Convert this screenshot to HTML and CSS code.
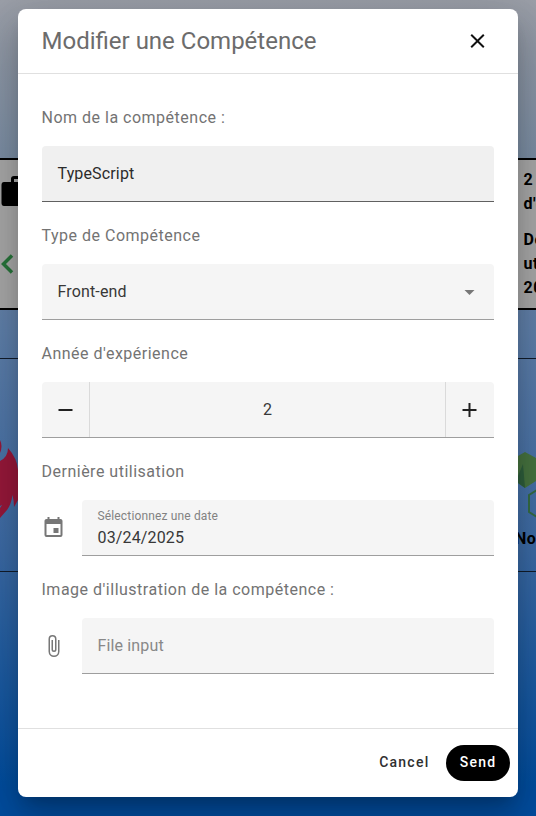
FILE: index.html
```html
<!DOCTYPE html>
<html lang="fr">
<head>
<meta charset="utf-8">
<title>Modifier une Compétence</title>
<link rel="stylesheet" href="styles.css">
</head>
<body>
<div class="page">
  <div class="band">
    <div class="band-icons">
      <svg width="18" height="32" viewBox="0 0 18 32"><path d="M4 6H11V3Q11 0 14 0H18V3H14V6H18V30H4Q1.500 30 1.500 27V9Q1.500 6 4 6Z"/></svg>
      <svg class="chevron" width="18" height="20" viewBox="0 0 18 20"><path d="M12 1.500L3.500 10L12 18.500"/></svg>
    </div>
    <div class="band-text"><p>2 ans<br>d'expérience</p><p>Dernière<br>utilisation<br>2025</p></div>
  </div>
  <div class="skills">
    <svg class="flame" width="18" height="90" viewBox="0 0 18 90"><path d="M0 5Q3 11 0 18ZM8 13Q17 23 18 35V65L14 72Q14 66 12.500 60Q11 70 7 75L0 83V73L2 70L0 71V26Q8 22 8 13Z"/></svg>
    <div class="node">
      <svg width="18" height="76" viewBox="0 0 18 76"><path fill="#477440" d="M0 7L7 3L18 9V32L7 39L0 34Z"/><path fill="#2f5f3d" d="M0 27L5 15L7 39L0 34Z"/><path fill="none" stroke="#356c43" stroke-width="2" d="M19 41L11 46V63L19 68"/></svg>
      <span>Node</span>
    </div>
  </div>
</div>
<main class="dialog">
  <header class="head">
    <h1>Modifier une Compétence</h1>
    <svg class="close" width="24" height="24" viewBox="0.5 0 24 24"><path d="M19 6.410L17.590 5L12 10.590L6.410 5L5 6.410L10.590 12L5 17.590L6.410 19L12 13.410L17.590 19L19 17.590L13.410 12Z"/></svg>
  </header>
  <form class="body">
    <div class="label">Nom de la compétence :</div>
    <div class="field hover">TypeScript</div>
    <div class="label">Type de Compétence</div>
    <div class="field select">Front-end<svg width="24" height="24" viewBox="0.5 0 24 24"><path d="M7 10L12 15L17 10Z"/></svg></div>
    <div class="label">Année d'expérience</div>
    <div class="field number">
      <span class="step"><svg width="24" height="24" viewBox="0.5 0 24 24"><path d="M19 13H5V11H19Z"/></svg></span>
      <span class="value">2</span>
      <span class="step"><svg width="24" height="24" viewBox="0.5 0 24 24"><path d="M19 13H13V19H11V13H5V11H11V5H13V11H19Z"/></svg></span>
    </div>
    <div class="label">Dernière utilisation</div>
    <div class="row">
      <svg width="24" height="24" viewBox="0.5 0 24 24"><path d="M19 19H5V8H19M16 1V3H8V1H6V3H5C3.890 3 3 3.890 3 5V19A2 2 0 0 0 5 21H19A2 2 0 0 0 21 19V5C21 3.890 20.100 3 19 3H18V1M17 12H12V17H17V12Z"/></svg>
      <div class="field date"><small>Sélectionnez une date</small><span>03/24/2025</span></div>
    </div>
    <div class="label">Image d'illustration de la compétence :</div>
    <div class="row">
      <svg width="24" height="24" viewBox="0.5 0 24 24"><path d="M16.500 6V17.500A4 4 0 0 1 12.500 21.500A4 4 0 0 1 8.500 17.500V5A2.500 2.500 0 0 1 11 2.500A2.500 2.500 0 0 1 13.500 5V15.500A1 1 0 0 1 12.500 16.500A1 1 0 0 1 11.500 15.500V6H10V15.500A2.500 2.500 0 0 0 12.500 18A2.500 2.500 0 0 0 15 15.500V5A4 4 0 0 0 11 1A4 4 0 0 0 7 5V17.500A5.500 5.500 0 0 0 12.500 23A5.500 5.500 0 0 0 18 17.500V6H16.500Z"/></svg>
      <div class="field empty">File input</div>
    </div>
  </form>
  <footer class="foot"><button class="btn">Cancel</button><button class="btn send">Send</button></footer>
</main>
</body>
</html>
```
FILE: styles.css
```css
* { box-sizing: border-box; }
body {
  margin: 0;
  height: 816px;
  padding: 9px 18px 0;
  position: relative;
  overflow: hidden;
  font: 16px/24px Roboto, sans-serif;
  color: #383838;
}
svg { display: block; flex: none; }
.page {
  position: absolute;
  inset: 0;
  padding-top: 158px;
  overflow: hidden;
  color: #000;
  background: linear-gradient(#9b9fa8 0, #7b8ea5 158px, #5f80ab 330px, #3c6ba6 550px, #004d9f 790px, #004d9f 100%);
}
.band {
  height: 152px;
  display: flex;
  justify-content: space-between;
  background: #a9a9a9;
  border: solid #000;
  border-width: 2px 0;
}
.band-icons { padding-top: 16px; }
.chevron { margin-top: 46px; fill: none; stroke: #28753b; stroke-width: 3.500; }
.band-text { width: 12.500px; padding-top: 8px; white-space: nowrap; font-weight: 700; }
.band-text p { margin: 0 0 12px; letter-spacing: .5px; }
.skills {
  height: 214px;
  margin-top: 48px;
  display: flex;
  justify-content: space-between;
  border: solid #111c2b;
  border-width: 1px 0;
}
.flame { margin-top: 76px; fill: #98183a; }
.node { width: 18px; padding-top: 90px; font-weight: 700; }
.node span { display: block; margin: 2px 0 0 -3px; white-space: nowrap; letter-spacing: .5px; }
.dialog {
  position: relative;
  width: 500px;
  height: 788px;
  display: flex;
  flex-direction: column;
  background: #fff;
  border-radius: 8px;
  box-shadow: 0 11px 15px -7px rgba(0,0,0,.2), 0 24px 38px 3px rgba(0,0,0,.14), 0 9px 46px 8px rgba(0,0,0,.12);
}
.head {
  height: 65px;
  padding: 0 28px 1px 23.500px;
  display: flex;
  align-items: center;
  justify-content: space-between;
  border-bottom: 1px solid #e0e0e0;
}
h1 { margin: 0; font-size: 24px; line-height: 32px; font-weight: 400; color: #6c6c6c; }
.close { fill: #111; }
.body { flex: 1; padding: 10px 24px 0; }
.label { height: 62px; margin-left: -.5px; padding: 22px 0 16px; letter-spacing: .5px; color: #737373; }
.field {
  height: 56px;
  flex: 1;
  padding: 0 16px 0 15.500px;
  display: flex;
  align-items: center;
  letter-spacing: .15px;
  background: #f5f5f5;
  border-bottom: 1px solid #9e9e9e;
  border-radius: 4px 4px 0 0;
}
.hover { background: #f0f0f0; border-color: #606060; color: #2b2b2b; }
.select { justify-content: space-between; padding-right: 12px; }
.select svg { fill: #777; }
.number { padding: 0; align-items: stretch; }
.step { width: 48px; display: flex; align-items: center; justify-content: center; border-right: 1px solid #dadada; }
.step:last-child { width: 49px; border-right: 0; border-left: 1px solid #dadada; }
.step svg { fill: #212121; }
.value { flex: 1; display: flex; align-items: center; justify-content: center; }
.row { display: flex; align-items: center; gap: 16px; }
.row svg { fill: #777; }
.date { flex-direction: column; align-items: flex-start; padding-top: 7px; }
.date small { font-size: 12px; line-height: 18px; color: #828282; }
.date span { margin-top: 1px; }
.empty { color: #888; }
.foot {
  height: 69px;
  padding: 0 8px;
  display: flex;
  align-items: center;
  justify-content: flex-end;
  gap: 8px;
  border-top: 1px solid #e0e0e0;
}
.btn {
  height: 36px;
  padding: 0 8.500px 2px;
  border: 0;
  background: none;
  color: #303030;
  font: 500 14px Roboto, sans-serif;
  letter-spacing: 1.25px;
}
.send { width: 64px; border-radius: 18px; background: #000; color: #fff; }
```
